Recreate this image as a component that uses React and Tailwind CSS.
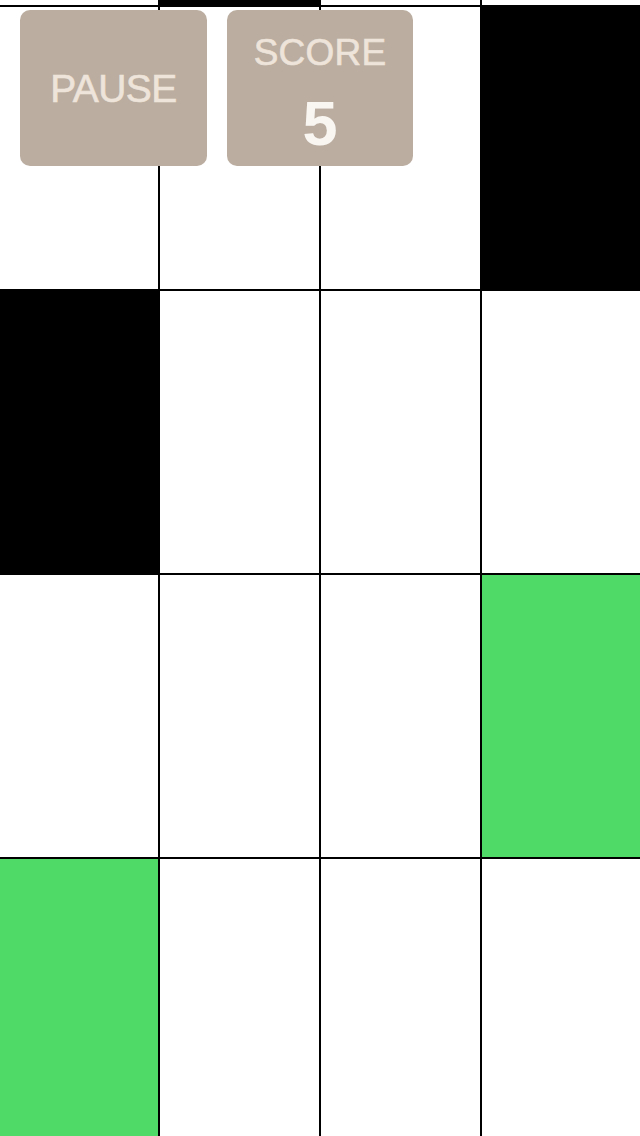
const rows = [
  ['white', 'black', 'white', 'white'],
  ['white', 'white', 'white', 'black'],
  ['black', 'white', 'white', 'white'],
  ['white', 'white', 'white', 'green'],
  ['green', 'white', 'white', 'white'],
];

const tileClass = {
  white: 'bg-white',
  black: 'bg-black',
  green: 'bg-[#4fd966]',
};

function Tile({ color }) {
  return <div className={`h-[282px] ${tileClass[color]}`} />;
}

export default function App() {
  return (
    <div
      className="relative w-[640px] h-[1136px] overflow-hidden bg-white"
      style={{ fontFamily: '"Liberation Sans", Arial, Helvetica, sans-serif' }}
    >
      {/* Board */}
      <div className="flex flex-col gap-[2px] bg-black -mt-[277px] -ml-[1px] w-[642px]">
        {rows.map((row, i) => (
          <div key={i} className="grid grid-cols-4 gap-[2px]">
            {row.map((c, j) => (
              <Tile key={j} color={c} />
            ))}
          </div>
        ))}
      </div>

      {/* HUD */}
      <div className="absolute top-[10px] left-[20px] flex gap-[20px]">
        <button className="w-[187px] h-[156px] rounded-[10px] bg-[#bbada0] flex items-center justify-center">
          <span className="text-[39px] leading-none text-[#eee4da] tracking-[-0.6px] [-webkit-text-stroke:0.6px_#eee4da]">PAUSE</span>
        </button>
        <div className="w-[186px] h-[156px] rounded-[10px] bg-[#bbada0] flex flex-col items-center">
          <span className="mt-[24px] text-[37px] leading-none text-[#eee4da] tracking-[0.2px] [-webkit-text-stroke:0.6px_#eee4da]">SCORE</span>
          <span className="mt-[21px] text-[63px] leading-none font-bold text-[#f9f6f2]">5</span>
        </div>
      </div>
    </div>
  );
}
